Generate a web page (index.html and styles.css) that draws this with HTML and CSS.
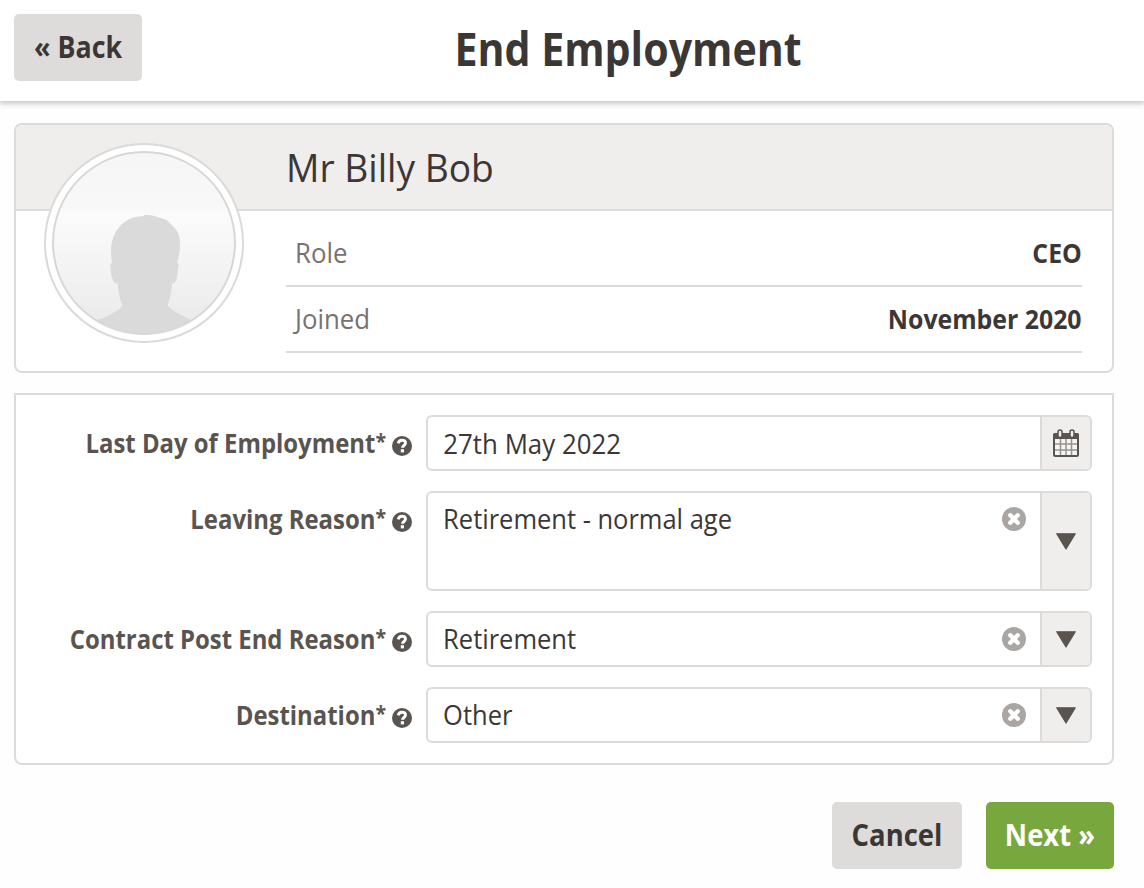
FILE: index.html
```html
<!DOCTYPE html>
<html lang="en">
<head>
  <meta charset="UTF-8">
  <meta name="viewport" content="width=device-width, initial-scale=1.0">
  <title>End Employment</title>
  <link rel="stylesheet" href="styles.css">
</head>
<body>

<!-- shared icons -->
<svg class="icon-defs" width="0" height="0">
  <symbol id="icon-help" viewBox="0 0 20 20">
    <circle cx="10" cy="10" r="10" fill="#595450"/>
    <path d="M6.2 7.400C6.700 5.200 8.200 4.300 10 4.300c2.100 0 3.500 1.100 3.500 2.800 0 2.400-3 2.400-3 4.700" fill="none" stroke="#fff" stroke-width="2.900"/>
    <rect x="8.800" y="13.200" width="3.200" height="3.200" fill="#fff"/>
  </symbol>
  <symbol id="icon-clear" viewBox="0 0 24 24">
    <circle cx="12" cy="12" r="12" fill="#aaa6a4"/>
    <path d="M8.300 8.300l7.400 7.400M15.700 8.300l-7.400 7.400" stroke="#fff" stroke-width="4.400" stroke-linecap="round"/>
  </symbol>
  <symbol id="icon-arrow" viewBox="0 0 20 17">
    <path d="M.7 .8h18.600L10 16z" fill="#595450" stroke="#595450" stroke-width="1.200" stroke-linejoin="round"/>
  </symbol>
  <symbol id="icon-calendar" viewBox="0 0 26 28">
    <rect x="1" y="5" width="24" height="22" rx="1.500" fill="#f6f5f4" stroke="#595450" stroke-width="2"/>
    <path d="M7.500 9v17M13 9v17M18.500 9v17M2 15h22M2 21h22" stroke="#96928f" stroke-width="1.500"/>
    <path d="M0 10V6q0-2 2-2h22q2 0 2 2v4z" fill="#595450"/>
    <rect x="5" y="1" width="4" height="7.500" rx="2" fill="#efeeec" stroke="#595450" stroke-width="1.500"/>
    <rect x="17" y="1" width="4" height="7.500" rx="2" fill="#efeeec" stroke="#595450" stroke-width="1.500"/>
  </symbol>
</svg>

<header class="page-header">
  <button class="btn btn-back"><span>« Back</span></button>
  <h1>End Employment</h1>
</header>

<main class="container">
  <section class="profile">
    <div class="profile-name"><span>Mr Billy Bob</span></div>
    <svg class="avatar" viewBox="0 0 200 200">
      <defs>
        <linearGradient id="avatar-bg" x1="0" y1="0" x2="0" y2="1">
          <stop offset="0" stop-color="#f6f6f6"/>
          <stop offset="0.300" stop-color="#f8f8f8"/>
          <stop offset="0.360" stop-color="#fbfbfb"/>
          <stop offset="1" stop-color="#e9e9e9"/>
        </linearGradient>
        <clipPath id="avatar-clip"><circle cx="100" cy="100" r="91"/></clipPath>
      </defs>
      <circle cx="100" cy="100" r="99" fill="#fff" stroke="#dcdad9" stroke-width="2"/>
      <circle cx="100" cy="100" r="91" fill="url(#avatar-bg)"/>
      <path clip-path="url(#avatar-clip)" fill="#dadada" d="M100 73c-19 0-33 14-33 36 0 4 .5 8 1.500 11-2 0-2.500 2-2 5 .5 8 2.500 16 7 15.500 1 8 2 16 5 22-4 6-14 10-26 15v21h96v-21c-11-5-20-10-25-15 3-7 4-15 4.500-22 5 0 5-7 6-14 1-4 .5-7-1-7 3-9 4-19 2-27-2-6-6-10-10-13-3-4-7-3.500-10-5-5-2-9-2.500-15-2.500z"/>
      <circle cx="100" cy="100" r="91" fill="none" stroke="#d8d7d7" stroke-width="2"/>
    </svg>
    <div class="profile-details">
      <div class="detail">
        <span class="detail-label">Role</span>
        <span class="detail-value">CEO</span>
      </div>
      <div class="detail">
        <span class="detail-label">Joined</span>
        <span class="detail-value">November 2020</span>
      </div>
    </div>
  </section>

  <form class="form-panel">
    <div class="form-group">
      <label>Last Day of Employment<span class="required">*</span></label>
      <svg class="help"><use href="#icon-help"/></svg>
      <div class="field">
        <div class="value date">27th May 2022</div>
        <div class="addon"><svg class="calendar"><use href="#icon-calendar"/></svg></div>
      </div>
    </div>
    <div class="form-group">
      <label>Leaving Reason<span class="required">*</span></label>
      <svg class="help"><use href="#icon-help"/></svg>
      <div class="field tall">
        <div class="value">Retirement - normal age</div>
        <svg class="clear"><use href="#icon-clear"/></svg>
        <div class="addon"><svg class="arrow"><use href="#icon-arrow"/></svg></div>
      </div>
    </div>
    <div class="form-group">
      <label>Contract Post End Reason<span class="required">*</span></label>
      <svg class="help"><use href="#icon-help"/></svg>
      <div class="field">
        <div class="value">Retirement</div>
        <svg class="clear"><use href="#icon-clear"/></svg>
        <div class="addon"><svg class="arrow"><use href="#icon-arrow"/></svg></div>
      </div>
    </div>
    <div class="form-group">
      <label>Destination<span class="required">*</span></label>
      <svg class="help"><use href="#icon-help"/></svg>
      <div class="field">
        <div class="value">Other</div>
        <svg class="clear"><use href="#icon-clear"/></svg>
        <div class="addon"><svg class="arrow"><use href="#icon-arrow"/></svg></div>
      </div>
    </div>
  </form>

  <div class="actions">
    <button class="btn btn-cancel"><span>Cancel</span></button>
    <button class="btn btn-next"><span>Next »</span></button>
  </div>
</main>

</body>
</html>
```

FILE: styles.css
```css
* {
  box-sizing: border-box;
}
body {
  margin: 0;
  font-family: "Open Sans", "Noto Sans", sans-serif;
  font-size: 27px;
  color: #3b3735;
  background-color: #fefefe;
}
.icon-defs {
  display: none;
}
.page-header {
  display: flex;
  height: 101px;
  padding: 14px 30px 0 14px;
  background-color: #fff;
  box-shadow: 0 2px 5px 1px rgba(0, 0, 0, 0.2);
}
/* the typeface is slightly condensed everywhere */
.page-header h1 {
  flex: 1;
  margin: 0;
  font-size: 47px;
  line-height: 68px;
  text-align: center;
  transform: scaleX(0.875);
}
.btn {
  height: 67px;
  padding: 0 0 3px;
  border: none;
  border-radius: 5px;
  font-family: inherit;
  font-size: 31px;
  font-weight: bold;
  white-space: nowrap;
  color: #3b3735;
  background-color: #dedcdb;
  cursor: pointer;
}
.btn span {
  display: block;
  transform: scaleX(0.885);
}
.btn-back {
  width: 128px;
}
.btn-back span {
  transform: scaleX(0.865);
}
.btn-cancel {
  width: 130px;
}
.btn-next {
  width: 128px;
  color: #fff;
  background-color: #77a73d;
}
.container {
  padding: 22px 30px 0 14px;
}
.profile {
  position: relative;
  height: 250px;
  border: 2px solid #dcdbda;
  border-radius: 8px;
  background-color: #fff;
  overflow: hidden;
}
.profile-name {
  height: 86px;
  padding-left: 270px;
  border-bottom: 2px solid #dcdbda;
  font-size: 39px;
  line-height: 83px;
  background-color: #efeeec;
}
.profile-name span {
  display: block;
  transform: scaleX(0.953);
  transform-origin: left;
}
/* overlaps the name bar */
.avatar {
  position: absolute;
  left: 28px;
  top: 18px;
  width: 200px;
  height: 200px;
}
.profile-details {
  margin: 0 30px 0 270px;
}
.detail {
  display: flex;
  justify-content: space-between;
  height: 66px;
  padding-left: 9px;
  border-bottom: 2px solid #dcdbda;
  line-height: 64px;
}
.detail:first-child {
  height: 76px;
  padding-top: 10px;
}
.detail-label {
  color: #777270;
  transform: scaleX(0.955);
  transform-origin: left;
}
.detail-value {
  font-weight: bold;
  transform: scaleX(0.92);
  transform-origin: right;
}
.form-panel {
  display: flex;
  flex-direction: column;
  gap: 20px;
  height: 372px;
  margin-top: 20px;
  padding: 20px 20px 0 0;
  border: 2px solid #dcdbda;
  border-radius: 0 0 8px 8px;
  background-color: #fff;
}
.form-group {
  display: flex;
}
.form-group label {
  width: 370px;
  height: 56px;
  font-weight: bold;
  line-height: 56px;
  text-align: right;
  white-space: nowrap;
  color: #595450;
  transform: scaleX(0.885);
  transform-origin: right;
}
.required {
  font-size: 22px;
  line-height: 0;
  vertical-align: 4px;
}
.help {
  width: 20px;
  height: 20px;
  margin: 21px 14px 0 6px;
}
.field {
  display: flex;
  flex: 1;
  height: 56px;
  border: 2px solid #dcdbda;
  border-radius: 6px;
  overflow: hidden;
}
.field.tall {
  height: 100px;
}
.value {
  flex: 1;
  padding-left: 16px;
  line-height: 52px;
  transform: scaleX(0.944);
  transform-origin: left;
}
.value.date {
  line-height: 54px;
  transform: scaleX(0.957);
}
.clear {
  width: 24px;
  height: 24px;
  margin: 14px 14px 0 0;
}
.addon {
  display: flex;
  align-items: center;
  justify-content: center;
  width: 50px;
  border-left: 2px solid #dcdbda;
  background-color: #efeeec;
}
.calendar {
  width: 26px;
  height: 28px;
}
.arrow {
  width: 20px;
  height: 17px;
}
.actions {
  display: flex;
  justify-content: flex-end;
  gap: 24px;
  margin-top: 37px;
}
```
